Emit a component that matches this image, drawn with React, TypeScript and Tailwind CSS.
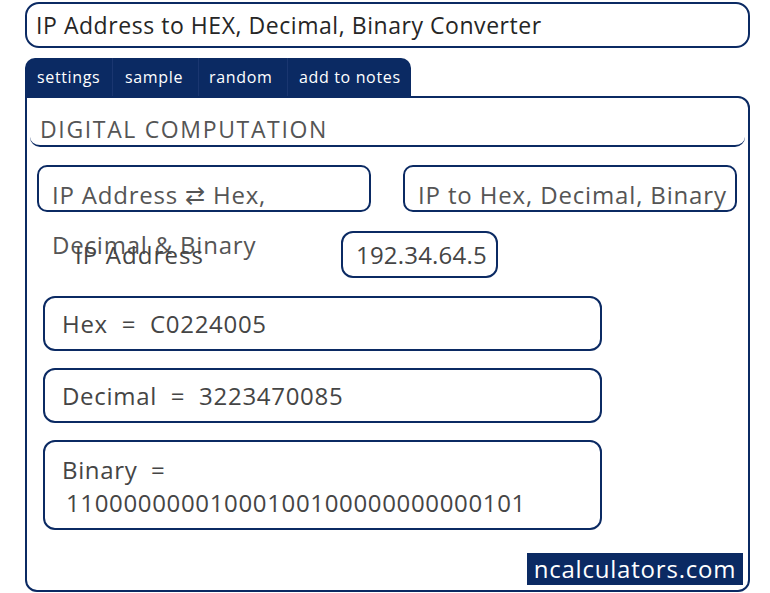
import React from "react";

export default function App() {
  return (
    <div
      className="w-[770px] h-[593px] bg-white overflow-hidden"
      style={{ fontFamily: '"Open Sans", "Noto Sans", sans-serif' }}
    >
      <div className="ml-[25px] w-[725px] pt-[2px]">
        {/* Title */}
        <div className="h-[46px] border-2 border-[#0b2a63] rounded-[14px] flex items-center pl-[9px] text-[23px] text-[#262626] tracking-[0.55px]">
          IP Address to HEX, Decimal, Binary Converter
        </div>

        {/* Tabs */}
        <div className="mt-[10px] w-[386px] h-[38px] bg-[#0b2a63] rounded-t-[10px] flex items-center text-white text-[16px] tracking-[0.65px]">
          <div className="w-[88px] h-full flex items-center pl-[12px] border-r border-[#1a3670]">settings</div>
          <div className="w-[86px] h-full flex items-center pl-[12px] border-r border-[#1a3670]">sample</div>
          <div className="w-[89px] h-full flex items-center pl-[10px] border-r border-[#1a3670]">random</div>
          <div className="flex-1 h-full flex items-center pl-[11px]">add to notes</div>
        </div>

        {/* Main */}
        <div className="h-[496px] border-2 border-[#0b2a63] rounded-tr-[12px] rounded-b-[12px] relative text-[#454545]">
          <div className="ml-[3px] mr-[3px] h-[49px] border-b-2 border-[#0b2a63] rounded-b-[10px] pl-[10px] pt-[18px] text-[23px] leading-[26px] text-[#555] tracking-[1.65px]">
            DIGITAL COMPUTATION
          </div>

          <div className="mt-[18px] ml-[10px] flex gap-[32px]">
            <div className="w-[334px] h-[47px] border-2 border-[#0b2a63] rounded-[10px] pl-[13px] pt-[3px] text-[24px] leading-[50px] text-[#555] tracking-[0.8px] whitespace-nowrap">
              IP Address ⇄ Hex,<br />Decimal &amp; Binary
            </div>
            <div className="w-[334px] h-[47px] border-2 border-[#0b2a63] rounded-[10px] pl-[13px] pt-[3px] text-[24px] leading-[50px] text-[#555] tracking-[0.85px] whitespace-nowrap">
              IP to Hex, Decimal, Binary
            </div>
          </div>

          <div className="mt-[19px] flex items-center">
            <div className="ml-[48px] w-[266px] text-[24px] tracking-[1.1px] text-[#454545]">IP Address</div>
            <div className="w-[157px] h-[47px] border-2 border-[#0b2a63] rounded-[12px] flex items-center pl-[13px] text-[24px] tracking-[0.2px] text-[#454545]">
              192.34.64.5
            </div>
          </div>

          <div className="mt-[18px] ml-[16px] w-[559px] h-[55px] border-2 border-[#0b2a63] rounded-[12px] flex items-center pl-[17px] text-[24px] tracking-[0.7px] whitespace-pre">
            Hex  =  C0224005
          </div>
          <div className="mt-[17px] ml-[16px] w-[559px] h-[55px] border-2 border-[#0b2a63] rounded-[12px] flex items-center pl-[17px] text-[24px] tracking-[0.7px] whitespace-pre">
            Decimal  =  3223470085
          </div>
          <div className="mt-[17px] ml-[16px] w-[559px] h-[90px] border-2 border-[#0b2a63] rounded-[12px] pl-[17px] pt-[11px] text-[24px] leading-[33px] tracking-[0.65px] whitespace-pre">
            <div>Binary  =</div>
            <div className="pl-[4px]">11000000001000100100000000000101</div>
          </div>

          <div className="absolute right-[5px] bottom-[5px] h-[32px] w-[216px] bg-[#0b2a63] text-white text-[24px] tracking-[0.8px] flex items-center justify-center">
            ncalculators.com
          </div>
        </div>
      </div>
    </div>
  );
}
